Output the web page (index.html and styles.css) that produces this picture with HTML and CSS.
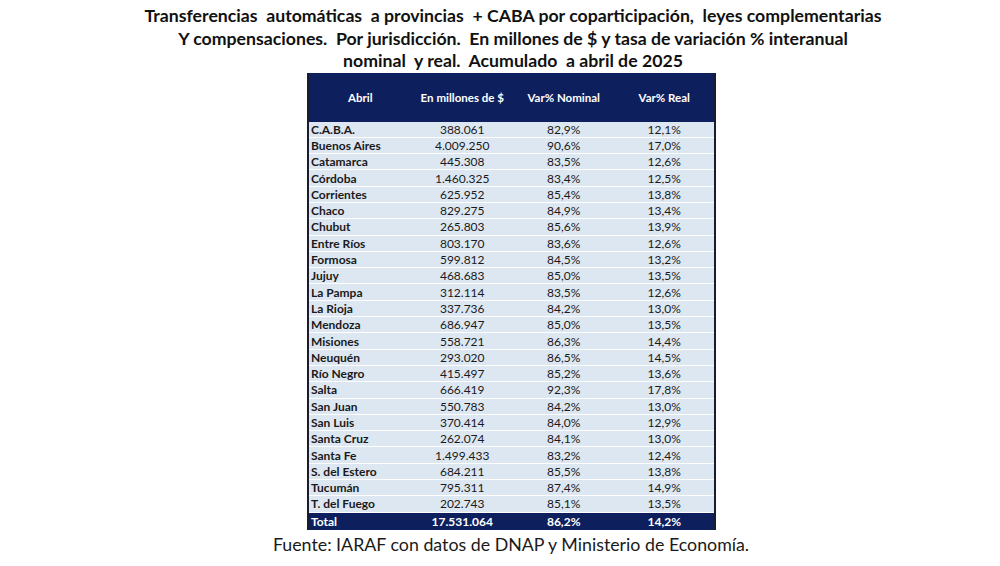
FILE: index.html
```html
<!DOCTYPE html>
<html lang="es">
<head>
<meta charset="utf-8">
<title>Transferencias automáticas</title>
<link rel="stylesheet" href="styles.css">
</head>
<body>
<div class="page">
  <h1 class="title"><span>Transferencias  automáticas  a provincias  + CABA por coparticipación,  leyes complementarias</span><span>Y compensaciones.  Por jurisdicción.  En millones de $ y tasa de variación % interanual</span><span>nominal  y real.  Acumulado  a abril de 2025</span></h1>
  <div class="table-wrap">
    <table class="data">
      <colgroup><col class="c1"><col class="c2"><col class="c3"><col class="c4"></colgroup>
      <thead>
        <tr><th>Abril</th><th>En millones de $</th><th>Var% Nominal</th><th>Var% Real</th></tr>
      </thead>
      <tbody>
        <tr><td>C.A.B.A.</td><td>388.061</td><td>82,9%</td><td>12,1%</td></tr>
        <tr><td>Buenos Aires</td><td>4.009.250</td><td>90,6%</td><td>17,0%</td></tr>
        <tr><td>Catamarca</td><td>445.308</td><td>83,5%</td><td>12,6%</td></tr>
        <tr><td>Córdoba</td><td>1.460.325</td><td>83,4%</td><td>12,5%</td></tr>
        <tr><td>Corrientes</td><td>625.952</td><td>85,4%</td><td>13,8%</td></tr>
        <tr><td>Chaco</td><td>829.275</td><td>84,9%</td><td>13,4%</td></tr>
        <tr><td>Chubut</td><td>265.803</td><td>85,6%</td><td>13,9%</td></tr>
        <tr><td>Entre Ríos</td><td>803.170</td><td>83,6%</td><td>12,6%</td></tr>
        <tr><td>Formosa</td><td>599.812</td><td>84,5%</td><td>13,2%</td></tr>
        <tr><td>Jujuy</td><td>468.683</td><td>85,0%</td><td>13,5%</td></tr>
        <tr><td>La Pampa</td><td>312.114</td><td>83,5%</td><td>12,6%</td></tr>
        <tr><td>La Rioja</td><td>337.736</td><td>84,2%</td><td>13,0%</td></tr>
        <tr><td>Mendoza</td><td>686.947</td><td>85,0%</td><td>13,5%</td></tr>
        <tr><td>Misiones</td><td>558.721</td><td>86,3%</td><td>14,4%</td></tr>
        <tr><td>Neuquén</td><td>293.020</td><td>86,5%</td><td>14,5%</td></tr>
        <tr><td>Río Negro</td><td>415.497</td><td>85,2%</td><td>13,6%</td></tr>
        <tr><td>Salta</td><td>666.419</td><td>92,3%</td><td>17,8%</td></tr>
        <tr><td>San Juan</td><td>550.783</td><td>84,2%</td><td>13,0%</td></tr>
        <tr><td>San Luis</td><td>370.414</td><td>84,0%</td><td>12,9%</td></tr>
        <tr><td>Santa Cruz</td><td>262.074</td><td>84,1%</td><td>13,0%</td></tr>
        <tr><td>Santa Fe</td><td>1.499.433</td><td>83,2%</td><td>12,4%</td></tr>
        <tr><td>S. del Estero</td><td>684.211</td><td>85,5%</td><td>13,8%</td></tr>
        <tr><td>Tucumán</td><td>795.311</td><td>87,4%</td><td>14,9%</td></tr>
        <tr><td>T. del Fuego</td><td>202.743</td><td>85,1%</td><td>13,5%</td></tr>
      </tbody>
      <tfoot>
        <tr><td>Total</td><td>17.531.064</td><td>86,2%</td><td>14,2%</td></tr>
      </tfoot>
    </table>
  </div>
  <p class="source">Fuente: IARAF con datos de DNAP y Ministerio de Economía.</p>
</div>
</body>
</html>
```

FILE: styles.css
```css
html, body {
  margin: 0;
  padding: 0;
  background: #ffffff;
}

.page {
  width: 1000px;
  height: 566px;
  overflow: hidden;
  display: flex;
  flex-direction: column;
  align-items: stretch;
}

.title {
  margin: 0;
  padding-top: 5px;
  padding-left: 26px;
  flex: none;
  display: flex;
  flex-direction: column;
  align-items: center;
  font-family: Lato, "Liberation Sans", sans-serif;
  font-weight: 700;
  font-size: 17.7px;
  line-height: 22.5px;
  color: #111111;
  white-space: pre;
}

.table-wrap {
  flex: none;
  padding-left: 307px;
}

.data {
  width: 409px;
  table-layout: fixed;
  border-collapse: collapse;
  font-family: Lato, "Liberation Sans", sans-serif;
  font-size: 12px;
  color: #1a1a1a;
  border-left: 2px solid #1b1b2e;
  border-right: 2px solid #1b1b2e;
}

.c1 { width: 103px; }
.c2 { width: 101px; }
.c3 { width: 101px; }
.c4 { width: 100px; }

.data thead th {
  height: 49px;
  padding: 0;
  background: #0e1f5e;
  color: #ffffff;
  font-weight: 700;
  font-size: 11.5px;
  text-align: center;
  vertical-align: middle;
}

.data tbody td {
  height: 15.3px;
  padding: 0;
  background: #dde7f2;
  border-bottom: 1px solid #ffffff;
  text-align: center;
  line-height: 15px;
}

.data tbody td:first-child,
.data tfoot td:first-child {
  text-align: left;
  font-weight: 700;
  padding-left: 2px;
}

.data tfoot td {
  height: 17px;
  padding: 0;
  background: #0e1f5e;
  color: #ffffff;
  font-weight: 700;
  text-align: center;
  line-height: 17px;
}

.source {
  flex: none;
  margin: 2px 0 0 0;
  padding-left: 22px;
  text-align: center;
  font-family: Lato, "Liberation Sans", sans-serif;
  font-size: 17.8px;
  line-height: 24px;
  color: #1a1a1a;
}
```
